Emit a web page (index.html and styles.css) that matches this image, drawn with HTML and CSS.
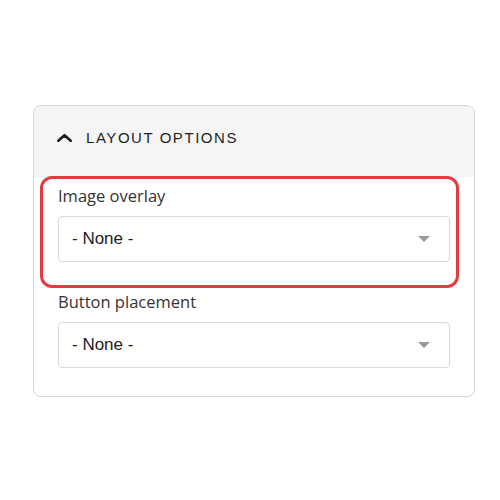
FILE: index.html
```html
<!DOCTYPE html>
<html>
<head>
<meta charset="utf-8">
<link rel="stylesheet" href="styles.css">
</head>
<body>
<div class="panel">
  <div class="panel-header">
    <svg class="chevron" width="15" height="8" viewBox="0 0 15 8"><path d="M1.3 6.8 L7.5 1.3 L13.7 6.8" fill="none" stroke="#1e1e1e" stroke-width="2.6" stroke-linecap="round" stroke-linejoin="round"/></svg>
    <span class="panel-title">LAYOUT OPTIONS</span>
  </div>
  <div class="panel-body">
    <div class="field field-first">
      <div class="highlight"></div>
      <div class="field-label">Image overlay</div>
      <div class="select">
        <span class="select-value">- None -</span>
        <svg class="select-arrow" width="12" height="6" viewBox="0 0 12 6"><path d="M0 0 L12 0 L6 6 Z" fill="#999"/></svg>
      </div>
    </div>
    <div class="field">
      <div class="field-label">Button placement</div>
      <div class="select">
        <span class="select-value">- None -</span>
        <svg class="select-arrow" width="12" height="6" viewBox="0 0 12 6"><path d="M0 0 L12 0 L6 6 Z" fill="#999"/></svg>
      </div>
    </div>
  </div>
</div>
</body>
</html>
```
FILE: styles.css
```css
html, body {
  margin: 0;
  padding: 0;
  background: #ffffff;
}
.panel {
  box-sizing: border-box;
  margin: 105px 0 0 33px;
  width: 442px;
  border: 1px solid #d4d4d4;
  border-radius: 8px;
}
.panel-header {
  box-sizing: border-box;
  height: 71px;
  background: #f5f5f5;
  border-radius: 7px 7px 0 0;
  display: flex;
  align-items: flex-start;
  padding: 23px 0 0 23px;
  gap: 14px;
}
.chevron {
  display: block;
  margin-top: 5px;
}
.panel-title {
  font-family: "Liberation Sans", Arial, sans-serif;
  font-size: 15px;
  line-height: 18px;
  letter-spacing: 1.55px;
  color: #1f1f1f;
}
.panel-body {
  padding: 8px 24px 28px 24px;
  display: flex;
  flex-direction: column;
  gap: 29px;
}
.field {
  position: relative;
  display: flex;
  flex-direction: column;
}
.highlight {
  position: absolute;
  left: -18px;
  top: -9px;
  right: -9px;
  bottom: -26px;
  border: 3px solid #e23b40;
  border-radius: 12px;
  pointer-events: none;
}
.field-label {
  font-family: "Open Sans", "Noto Sans", sans-serif;
  font-size: 16.5px;
  line-height: 22px;
  color: #333333;
  margin-bottom: 9px;
}
.select {
  box-sizing: border-box;
  height: 46px;
  border: 1px solid #d9d9d9;
  border-radius: 4px;
  background: #fff;
  display: flex;
  align-items: center;
  justify-content: space-between;
  padding: 0 19px 0 13px;
}
.select-value {
  font-family: "Liberation Sans", Arial, sans-serif;
  font-size: 17px;
  color: #1c1c1c;
}
.select-arrow {
  display: block;
}
```
